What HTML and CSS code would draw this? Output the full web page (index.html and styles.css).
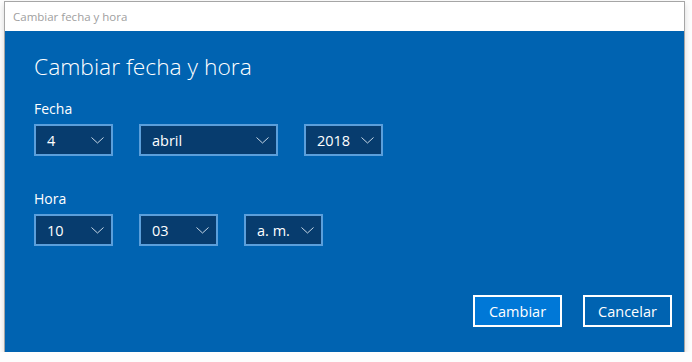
FILE: index.html
```html
<!DOCTYPE html>
<html lang="es">
<head>
  <meta charset="UTF-8">
  <title>Cambiar fecha y hora</title>
  <link rel="stylesheet" href="styles.css">
</head>
<body>
  <div class="window">
    <div class="titlebar">Cambiar fecha y hora</div>
    <div class="content">
      <h1>Cambiar fecha y hora</h1>

      <div class="label">Fecha</div>
      <div class="row">
        <div class="select w-day"><span>4</span><svg width="13" height="7" viewBox="0 0 13 7"><polyline points="0.5,0.5 6.5,6 12.5,0.5"/></svg></div>
        <div class="select w-month"><span>abril</span><svg width="13" height="7" viewBox="0 0 13 7"><polyline points="0.5,0.5 6.5,6 12.5,0.5"/></svg></div>
        <div class="select w-day"><span>2018</span><svg width="13" height="7" viewBox="0 0 13 7"><polyline points="0.5,0.5 6.5,6 12.5,0.5"/></svg></div>
      </div>

      <div class="label hora">Hora</div>
      <div class="row">
        <div class="select w-day"><span>10</span><svg width="13" height="7" viewBox="0 0 13 7"><polyline points="0.5,0.5 6.5,6 12.5,0.5"/></svg></div>
        <div class="select w-day"><span>03</span><svg width="13" height="7" viewBox="0 0 13 7"><polyline points="0.5,0.5 6.5,6 12.5,0.5"/></svg></div>
        <div class="select w-day"><span>a. m.</span><svg width="13" height="7" viewBox="0 0 13 7"><polyline points="0.5,0.5 6.5,6 12.5,0.5"/></svg></div>
      </div>

      <div class="buttons">
        <button class="primary">Cambiar</button>
        <button>Cancelar</button>
      </div>
    </div>
  </div>
</body>
</html>
```

FILE: styles.css
```css
body { margin: 0; background: #fdfdfd; font-family: "Open Sans", "Noto Sans", sans-serif; }
.window { margin: 1px 7px 0 4px; border: 1px solid #a6a6a6; border-bottom: none; box-shadow: 0 3px 6px rgba(0,0,0,0.15); }
.titlebar { height: 29px; background: #fff; color: #a0a0a0; font-size: 11.5px; line-height: 29px; padding-left: 8px; }
.content { background: #0063b1; height: 321px; box-sizing: border-box; padding: 19px 12px 0 29px; color: #fff; }
h1 { margin: 0; font-size: 22.8px; font-weight: 300; line-height: 34px; }
.label { font-size: 14px; line-height: 20px; margin-top: 15px; }
.label.hora { margin-top: 33px; }
.row { display: flex; gap: 26px; margin-top: 5px; }
.select { height: 32px; box-sizing: border-box; border: 2px solid #5b9fdb; background: #073c6e; display: flex; align-items: center; justify-content: space-between; padding: 0 7px 0 11px; font-size: 14.5px; }
.select svg { fill: none; stroke: #c6d6e6; stroke-width: 1; }
.w-day { width: 79px; }
.w-month { width: 139px; }
.buttons { display: flex; justify-content: flex-end; gap: 21px; margin-top: 49px; }
button { height: 32px; width: 89px; border: 2px solid #fff; background: #0063b1; color: #fff; font-family: inherit; font-size: 14.5px; padding: 0; }
button.primary { background: #0078d7; }
```
